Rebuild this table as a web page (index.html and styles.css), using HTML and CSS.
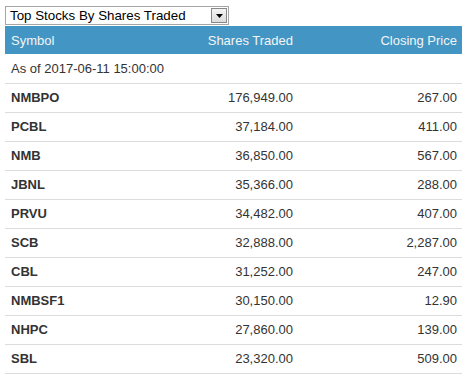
FILE: index.html
```html
<!DOCTYPE html>
<html>
<head>
<meta charset="utf-8">
<link rel="stylesheet" href="styles.css">
</head>
<body>
<div class="wrap">
  <div class="select">
    <span class="select-text">Top Stocks By Shares Traded</span>
    <span class="select-btn"><svg width="7" height="4" viewBox="0 0 7 4"><path d="M0 0H7L3.5 4Z" fill="#000"/></svg></span>
  </div>
  <table class="stocks">
    <colgroup><col class="c1"><col class="c2"><col class="c3"></colgroup>
    <thead>
      <tr><th class="l">Symbol</th><th class="r">Shares Traded</th><th class="r">Closing Price</th></tr>
    </thead>
    <tbody>
      <tr class="asof"><td colspan="3">As of 2017-06-11 15:00:00</td></tr>
      <tr><td class="sym">NMBPO</td><td class="r">176,949.00</td><td class="r">267.00</td></tr>
      <tr><td class="sym">PCBL</td><td class="r">37,184.00</td><td class="r">411.00</td></tr>
      <tr><td class="sym">NMB</td><td class="r">36,850.00</td><td class="r">567.00</td></tr>
      <tr><td class="sym">JBNL</td><td class="r">35,366.00</td><td class="r">288.00</td></tr>
      <tr><td class="sym">PRVU</td><td class="r">34,482.00</td><td class="r">407.00</td></tr>
      <tr><td class="sym">SCB</td><td class="r">32,888.00</td><td class="r">2,287.00</td></tr>
      <tr><td class="sym">CBL</td><td class="r">31,252.00</td><td class="r">247.00</td></tr>
      <tr><td class="sym">NMBSF1</td><td class="r">30,150.00</td><td class="r">12.90</td></tr>
      <tr><td class="sym">NHPC</td><td class="r">27,860.00</td><td class="r">139.00</td></tr>
      <tr><td class="sym">SBL</td><td class="r">23,320.00</td><td class="r">509.00</td></tr>
    </tbody>
  </table>
</div>
</body>
</html>
```
FILE: styles.css
```css
html, body {
  margin: 0;
  padding: 0;
  background: #fff;
}
body {
  font-family: "Liberation Sans", Arial, sans-serif;
  font-size: 13px;
  color: #333;
}
.wrap {
  padding: 6px 4px 0 5px;
  width: 457px;
}
.select {
  width: 224px;
  height: 19px;
  box-sizing: border-box;
  border: 1px solid #a5a5a5;
  display: flex;
  align-items: center;
  justify-content: space-between;
  background: #fff;
}
.select-text {
  color: #000;
  padding-left: 4px;
  font-size: 13.33px;
  line-height: 17px;
}
.select-btn {
  width: 16px;
  height: 15px;
  margin-right: 1px;
  box-sizing: border-box;
  border: 1px solid #888;
  background: linear-gradient(#f4f4f4, #dcdcdc);
  display: flex;
  align-items: center;
  justify-content: center;
}
.select-btn svg { display: block; margin-top: 1px; }
.stocks {
  width: 457px;
  border-collapse: collapse;
  margin-top: 1px;
  table-layout: fixed;
}
.c1 { width: 150px; }
.c2 { width: 143px; }
.c3 { width: 164px; }
.stocks th {
  background: #4396c4;
  color: #f4f4f4;
  font-weight: normal;
  height: 28px;
  padding: 0 5px;
  box-sizing: border-box;
}
.stocks td {
  height: 29px;
  padding: 0 5px;
  border-bottom: 1px solid #dcdcdc;
  box-sizing: border-box;
}
.l { text-align: left; padding-left: 6px !important; }
.r { text-align: right; }
.asof td { padding-left: 6px; }
.sym { font-weight: bold; padding-left: 6px !important; }
```
